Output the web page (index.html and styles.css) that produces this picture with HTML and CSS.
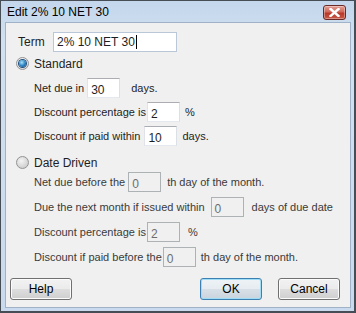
FILE: index.html
```html
<!DOCTYPE html>
<html lang="en">
<head>
    <meta charset="UTF-8">
    <title>Edit 2% 10 NET 30</title>
    <link rel="stylesheet" href="styles.css">
</head>
<body>
    <div class="window">
        <div class="titlebar">
            <span class="title">Edit 2% 10 NET 30</span>
            <button class="close-btn" aria-label="Close">
                <svg width="11" height="9" viewBox="0 0 11 9">
                    <path d="M1.5 1 L9.5 8 M9.5 1 L1.5 8" stroke="#fff" stroke-width="2.4" stroke-linecap="square"/>
                </svg>
            </button>
        </div>

        <div class="client">
            <div class="term-row">
                <label class="term-label" for="termInput">Term</label>
                <div class="textbox term-input" id="termInput">2% 10 NET 30<span class="caret"></span></div>
            </div>

            <!-- Standard -->
            <div class="radio-row standard-radio">
                <span class="radio checked"></span>
                <span>Standard</span>
            </div>
            <div class="sub-rows standard-rows">
                <div class="row">
                    <span class="lbl">Net due in</span>
                    <div class="textbox small gap-l3">30</div>
                    <span class="after gap-11">days.</span>
                </div>
                <div class="row">
                    <span class="lbl">Discount percentage is</span>
                    <div class="textbox small gap-l1">2</div>
                    <span class="after gap-5">%</span>
                </div>
                <div class="row">
                    <span class="lbl">Discount if paid within</span>
                    <div class="textbox small gap-l4">10</div>
                    <span class="after gap-5">days.</span>
                </div>
            </div>

            <!-- Date Driven -->
            <div class="radio-row date-radio">
                <span class="radio"></span>
                <span>Date Driven</span>
            </div>
            <div class="sub-rows date-rows disabled">
                <div class="row">
                    <span class="lbl">Net due before the</span>
                    <div class="textbox small gap-l3">0</div>
                    <span class="after gap-6">th day of the month.</span>
                </div>
                <div class="row">
                    <span class="lbl">Due the next month if issued within</span>
                    <div class="textbox small gap-l6">0</div>
                    <span class="after gap-8">days of due date</span>
                </div>
                <div class="row">
                    <span class="lbl">Discount percentage is</span>
                    <div class="textbox small gap-l1">2</div>
                    <span class="after gap-8">%</span>
                </div>
                <div class="row">
                    <span class="lbl">Discount if paid before the</span>
                    <div class="textbox small gap-l1">0</div>
                    <span class="after gap-5">th day of the month.</span>
                </div>
            </div>

            <div class="btn-row">
                <button class="btn">Help</button>
                <span class="spacer"></span>
                <button class="btn default">OK</button>
                <button class="btn">Cancel</button>
            </div>
        </div>
    </div>
</body>
</html>
```

FILE: styles.css
```css
:root {
    --frame: #c9daee;
    --client: #f0f0f0;
    --text: #1e1e1e;
    --disabled-text: #6d6d6d;
}

* {
    margin: 0;
    padding: 0;
    box-sizing: border-box;
}

body {
    background: #ffffff;
    font-family: 'Liberation Sans', Arial, sans-serif;
    font-size: 11px;
    color: var(--text);
}

.window {
    width: 356px;
    height: 313px;
    display: flex;
    flex-direction: column;
    background: linear-gradient(to bottom, #c3d6ec, #d2e1f1 40px, var(--frame));
    border: 1px solid #474d55;
    border-right-width: 2px;
    border-bottom-width: 2px;
    padding: 0 3px 3px 4px;
}

.titlebar {
    height: 21px;
    display: flex;
    align-items: center;
    padding-left: 2px;
}

.title {
    font-size: 12px;
    color: #000;
    flex: 1;
}

.close-btn {
    width: 23px;
    height: 15px;
    margin-right: 5px;
    margin-top: 2px;
    border: 1px solid #6b2a26;
    border-radius: 3px;
    background: linear-gradient(to bottom, #e3a096, #cf6a5c 45%, #b8392a 55%, #c95a48);
    display: flex;
    align-items: center;
    justify-content: center;
    box-shadow: inset 0 0 0 1px rgba(255,255,255,0.35);
}

.client {
    flex: 1;
    display: flex;
    flex-direction: column;
    background: var(--client);
    border: 1px solid #9fb2c8;
    padding: 9px 0 7px 10px;
}

.term-row {
    display: flex;
    align-items: center;
    height: 20px;
    margin-left: 2px;
}

.term-label {
    width: 35px;
    font-size: 12px;
}

.textbox {
    height: 20px;
    background: #fff;
    border: 1px solid #abadb3;
    border-left-color: #e2e3ea;
    border-right-color: #dbdfe6;
    border-bottom-color: #e3e9ef;
    display: flex;
    align-items: center;
    padding: 2px 0 0 3px;
    font-size: 12px;
}

.term-input {
    width: 124px;
    border-color: #b9c7d8;
    padding-top: 0;
}

.caret {
    width: 1px;
    height: 14px;
    background: #000;
    margin-left: 1px;
}

.textbox.small {
    width: 33px;
    padding-top: 4px;
}

.radio-row {
    display: flex;
    align-items: center;
    gap: 5px;
    height: 13px;
    font-size: 12px;
}

.standard-radio {
    margin-top: 5px;
}

.date-radio {
    margin-top: 10px;
}

.radio {
    width: 13px;
    height: 13px;
    border-radius: 50%;
    border: 1px solid #939393;
    background: radial-gradient(circle at 40% 35%, #f4f4f4, #d6d6d6 60%, #c2c2c2);
    display: flex;
    align-items: center;
    justify-content: center;
}

.radio.checked {
    background: radial-gradient(circle at 40% 35%, #ffffff, #e3e3e3 60%, #cbcbcb);
}

.radio.checked::after {
    content: '';
    width: 7px;
    height: 7px;
    border-radius: 50%;
    background: radial-gradient(circle at 40% 35%, #a8e4fb, #2b7fc0 55%, #0d3f72);
    box-shadow: 0 0 0 1px #1e4f7e;
}

.sub-rows {
    display: flex;
    flex-direction: column;
    padding-left: 18px;
}

.standard-rows {
    margin-top: 8px;
    gap: 4px;
}

.date-rows {
    margin-top: 3px;
    gap: 5px;
}

.row {
    display: flex;
    align-items: center;
    height: 20px;
}

.gap-l1 { margin-left: 1px; }
.gap-l3 { margin-left: 3px; }
.gap-l4 { margin-left: 4px; }
.gap-l6 { margin-left: 6px; }
.gap-5 { margin-left: 5px; }
.gap-6 { margin-left: 6px; }
.gap-8 { margin-left: 8px; }
.gap-11 { margin-left: 11px; }

.disabled .lbl,
.disabled .after {
    color: #3a3a3a;
}

.disabled .textbox {
    background: var(--client);
    border-color: #adb2b5;
    color: var(--disabled-text);
}

.btn-row {
    margin-top: auto;
    display: flex;
    align-items: center;
    gap: 16px;
    padding: 0 10px 0 0;
    margin-left: -6px;
}

.spacer {
    flex: 1;
}

.btn {
    width: 62px;
    height: 22px;
    font-family: 'Liberation Sans', Arial, sans-serif;
    font-size: 12px;
    color: #000;
    border: 1px solid #707070;
    border-radius: 3px;
    background: linear-gradient(to bottom, #f2f2f2, #ebebeb 50%, #dddddd 51%, #cfcfcf);
    box-shadow: inset 0 0 0 1px #fcfcfc;
}

.btn.default {
    border-color: #3c7fb1;
    box-shadow: inset 0 0 0 1px #9fdcf5;
    background: linear-gradient(to bottom, #eef3f7, #e6ecf1 50%, #d8e0e7 51%, #cad4dd);
}
```
